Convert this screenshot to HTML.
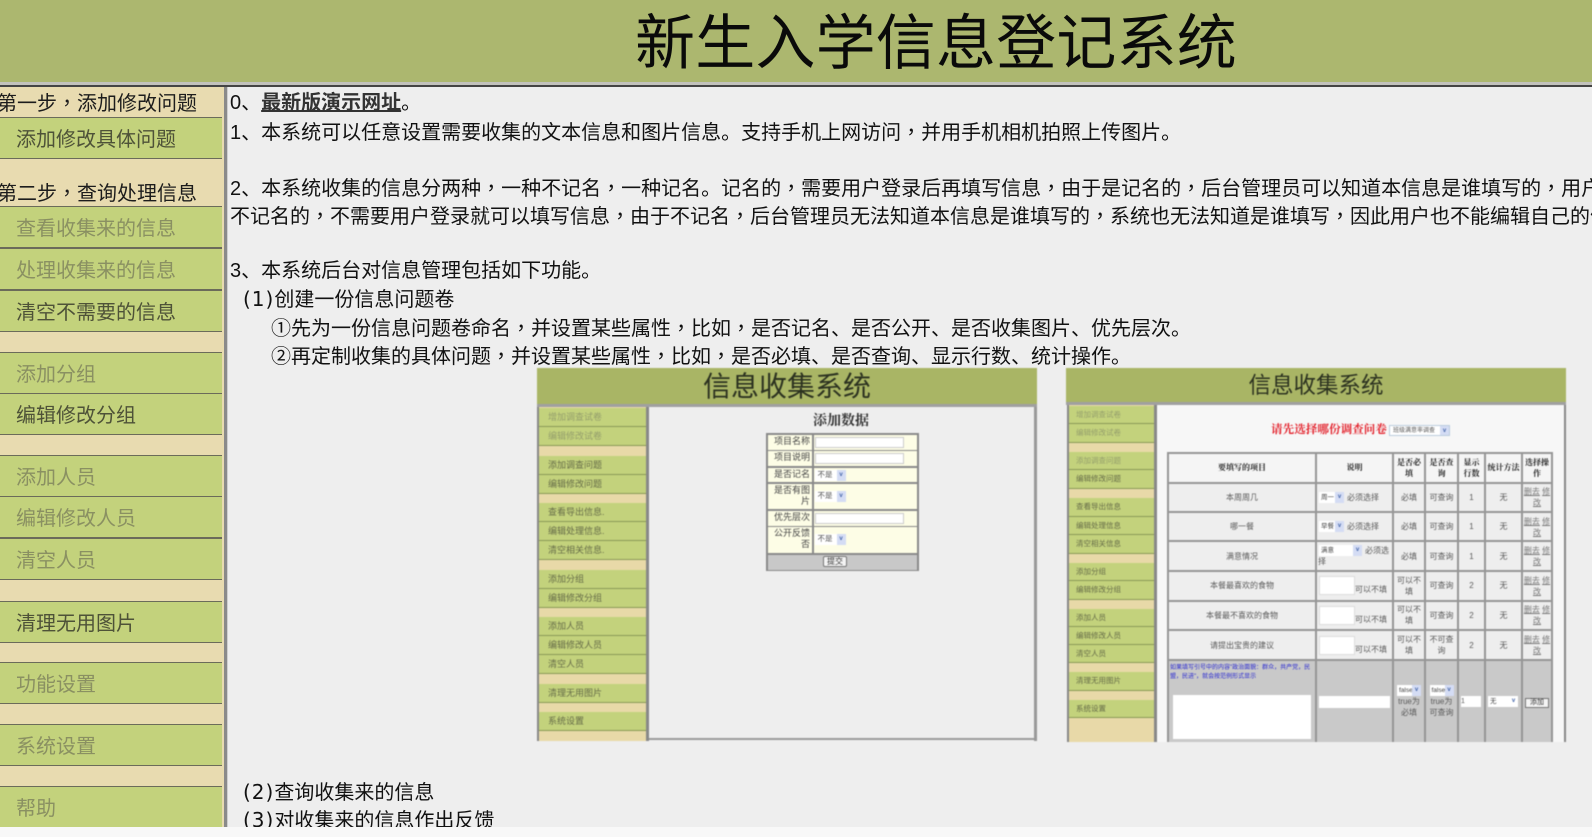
<!DOCTYPE html>
<html>
<head>
<meta charset="utf-8">
<title>新生入学信息登记系统</title>
<style>
*{box-sizing:border-box}
html,body{margin:0;padding:0;width:1592px;height:837px;overflow:hidden;background:#f8f8f8;
font-family:"Liberation Sans","Noto Sans CJK SC",sans-serif;color:#111}
.a{position:absolute}
#page{position:absolute;left:0;top:0;width:1592px;height:827px;overflow:hidden;background:#eeeeee}
#hd{left:0;top:0;width:1592px;height:82px;background:#acb76f}
#hd div{position:absolute;left:635px;top:0;height:82px;line-height:88px;font-size:60px;letter-spacing:.2px;white-space:nowrap;color:#0a0a0a}
#b1{left:0;top:82px;width:1592px;height:3px;background:#c2c2bc}
#b2{left:0;top:85px;width:1592px;height:2px;background:#444}
#side{left:0;top:87px;width:224px;height:740px;background:#e8dbb0;overflow:hidden;font-size:20px}
#bar{left:224px;top:87px;width:3px;height:740px;background:#8a8a8a}
#bar2{left:227px;top:87px;width:1px;height:740px;background:#cfcfcf}
.st{position:absolute;left:-3px;white-space:nowrap;color:#1c1c1c;line-height:28px}
.it{position:absolute;left:0;width:222px;height:42px;background:#c3d27c;border-top:1px solid #6b6b5a;border-bottom:1px solid #6b6b5a;padding-left:16px;line-height:45px;white-space:nowrap;color:#8a9062}
.it.d{color:#4e5238}
.c{font-family:"Noto Sans CJK TC",sans-serif}
.p{font-family:"DejaVu Sans",sans-serif;letter-spacing:1px}
#txt{left:230px;top:89px;width:1362px;height:738px;overflow:hidden;font-size:20px;line-height:28px;white-space:nowrap;color:#111}
#txt div{position:absolute;left:0;white-space:nowrap}
#txt b{color:#333;text-decoration:underline}
.shot{position:absolute;overflow:hidden;background:#eeeeee;filter:blur(.45px)}
.sh{position:absolute;left:0;top:0;width:100%;background:#a9b565;text-align:center;white-space:nowrap;color:#2c3220}
.sb{position:absolute;background:#e8d9a8;border-left:2px solid #888;border-right:3px solid #888;overflow:hidden}
.r{position:relative;background:#c3d27c;border-bottom:1px solid #8a9a58;white-space:nowrap;color:#666c48}
.r.x{margin-top:9.5px}
.r.y{color:#949e6c}
#t1 div{position:absolute}
.l{background:#fdfde6;color:#444;font-size:9px;line-height:11px;text-align:right;padding:1px 2px 0 2px}
.v{background:#fdfde6}
.in{position:absolute;background:#fff;border:1px solid #ccc;height:11px}
.se{position:absolute;background:#fff;font-size:7.5px;color:#555;line-height:10px;height:11px;padding-left:3px;white-space:nowrap}
.se i,.sl i{position:absolute;right:0;top:0;width:9px;height:100%;background:#d4dcf4;color:#46a;font-style:normal;font-weight:bold;text-align:center;font-size:6px;line-height:10px}
.sl{display:inline-block;position:relative;height:11px;background:#fff;font-size:6.5px;line-height:11px;padding-left:2px;vertical-align:middle;text-align:left;color:#444;margin-right:3px}
table.tb{position:absolute;left:101px;top:84px;width:386px;table-layout:fixed;border-collapse:separate;border-spacing:2px;background:#969696;font-size:8px;line-height:11px;color:#5a5a5a}
table.tb td{background:#eee;padding:0;text-align:center;overflow:hidden;position:relative}
table.tb tr.h td{font-family:"Liberation Serif","Noto Serif CJK SC",serif;font-weight:bold;color:#222;background:#f5f5f5}
table.tb tr.f td{background:#c9c9c9}
.u{text-decoration:underline;color:#777}
.bx{display:inline-block;width:36px;height:19px;background:#fff;vertical-align:bottom;border:1px solid #ddd}
</style>
</head>
<body>
<div id="page">
<div id="hd" class="a"><div>新生入学信息登记系统</div></div>
<div id="b1" class="a"></div>
<div id="b2" class="a"></div>

<div id="side" class="a">
<div class="st" style="top:1px">第一步<span class="c" lang="zh-Hant">，</span>添加修改问题</div>
<div class="it d" style="top:30px">添加修改具体问题</div>
<div class="st" style="top:91px">第二步<span class="c" lang="zh-Hant">，</span>查询处理信息</div>
<div class="it" style="top:119px">查看收集来的信息</div>
<div class="it" style="top:161px">处理收集来的信息</div>
<div class="it d" style="top:202.5px">清空不需要的信息</div>
<div class="it" style="top:264.5px">添加分组</div>
<div class="it d" style="top:306px">编辑修改分组</div>
<div class="it" style="top:367.5px">添加人员</div>
<div class="it" style="top:409px">编辑修改人员</div>
<div class="it" style="top:451px">清空人员</div>
<div class="it d" style="top:514px">清理无用图片</div>
<div class="it" style="top:575px">功能设置</div>
<div class="it" style="top:637px">系统设置</div>
<div class="it" style="top:699px;height:50px">帮助</div>
</div>
<div id="bar" class="a"></div>
<div id="bar2" class="a"></div>

<div id="txt" class="a">
<div style="top:0">0、<b>最新版演示网址</b>。</div>
<div style="top:28px">1、本系统可以任意设置需要收集的文本信息和图片信息。支持手机上网访问<span class="c" lang="zh-Hant">，</span>并用手机相机拍照上传图片。</div>
<div style="top:84px">2、本系统收集的信息分两种<span class="c" lang="zh-Hant">，</span>一种不记名<span class="c" lang="zh-Hant">，</span>一种记名。记名的<span class="c" lang="zh-Hant">，</span>需要用户登录后再填写信息<span class="c" lang="zh-Hant">，</span>由于是记名的<span class="c" lang="zh-Hant">，</span>后台管理员可以知道本信息是谁填写的<span class="c" lang="zh-Hant">，</span>用户也能编辑自己填写的信息。</div>
<div style="top:112px">不记名的<span class="c" lang="zh-Hant">，</span>不需要用户登录就可以填写信息<span class="c" lang="zh-Hant">，</span>由于不记名<span class="c" lang="zh-Hant">，</span>后台管理员无法知道本信息是谁填写的<span class="c" lang="zh-Hant">，</span>系统也无法知道是谁填写<span class="c" lang="zh-Hant">，</span>因此用户也不能编辑自己的信息。</div>
<div style="top:168px">3、本系统后台对信息管理包括如下功能。</div>
<div style="top:196px;left:13px"><span class="p">(1)</span>创建一份信息问题卷</div>
<div style="top:224px;left:41px">①先为一份信息问题卷命名<span class="c" lang="zh-Hant">，</span>并设置某些属性<span class="c" lang="zh-Hant">，</span>比如<span class="c" lang="zh-Hant">，</span>是否记名、是否公开、是否收集图片、优先层次。</div>
<div style="top:252px;left:41px">②再定制收集的具体问题<span class="c" lang="zh-Hant">，</span>并设置某些属性<span class="c" lang="zh-Hant">，</span>比如<span class="c" lang="zh-Hant">，</span>是否必填、是否查询、显示行数、统计操作。</div>
<div style="top:689px;left:13px"><span class="p">(2)</span>查询收集来的信息</div>
<div style="top:717px;left:13px"><span class="p">(3)</span>对收集来的信息作出反馈</div>
</div>

<!-- shot 1 -->
<div class="shot" style="left:537px;top:368px;width:500px;height:373px">
<div class="sh" style="height:36px;line-height:38px;font-size:28px">信息收集系统</div>
<div class="a" style="left:0;top:36px;width:500px;height:3px;background:#a0a0a0"></div>
<div class="sb" style="left:0;top:39px;width:112px;height:334px;padding-top:1px;font-size:9px;line-height:18px">
<div class="r y" style="height:19px;padding-left:9px">增加调查试卷</div>
<div class="r y" style="height:19px;padding-left:9px">编辑修改试卷</div>
<div class="r x" style="height:19px;padding-left:9px">添加调查问题</div>
<div class="r" style="height:19px;padding-left:9px">编辑修改问题</div>
<div class="r x" style="height:19px;padding-left:9px">查看导出信息.</div>
<div class="r" style="height:19px;padding-left:9px">编辑处理信息.</div>
<div class="r" style="height:19px;padding-left:9px">清空相关信息.</div>
<div class="r x" style="height:19px;padding-left:9px">添加分组</div>
<div class="r" style="height:19px;padding-left:9px">编辑修改分组</div>
<div class="r x" style="height:19px;padding-left:9px">添加人员</div>
<div class="r" style="height:19px;padding-left:9px">编辑修改人员</div>
<div class="r" style="height:19px;padding-left:9px">清空人员</div>
<div class="r x" style="height:19px;padding-left:9px">清理无用图片</div>
<div class="r x" style="height:19px;padding-left:9px">系统设置</div>
</div>
<div class="a" style="left:112px;top:370px;width:388px;height:2px;background:#9a9a9a"></div>
<div class="a" style="left:497px;top:39px;width:3px;height:334px;background:#999"></div>
<div class="a" style="left:264px;top:46px;width:80px;text-align:center;font:bold 14px/16px 'Liberation Serif','Noto Serif CJK SC',serif;color:#333">添加数据</div>
<div id="t1" class="a" style="left:229px;top:65px;width:153px;height:138px;background:#8a8a8a">
<div class="l" style="left:2px;top:1.5px;width:44px;height:15px">项目名称</div><div class="v" style="left:47.5px;top:1.5px;width:103.5px;height:15px"><span class="in" style="left:1px;top:2px;width:89px"></span></div>
<div class="l" style="left:2px;top:18px;width:44px;height:15px">项目说明</div><div class="v" style="left:47.5px;top:18px;width:103.5px;height:15px"><span class="in" style="left:1px;top:2px;width:89px"></span></div>
<div class="l" style="left:2px;top:34.5px;width:44px;height:14.5px">是否记名</div><div class="v" style="left:47.5px;top:34.5px;width:103.5px;height:14.5px"><span class="se" style="left:1px;top:2px;width:31px">不是<i>v</i></span></div>
<div class="l" style="left:2px;top:50.5px;width:44px;height:25.5px">是否有图片</div><div class="v" style="left:47.5px;top:50.5px;width:103.5px;height:25.5px"><span class="se" style="left:1px;top:7px;width:31px">不是<i>v</i></span></div>
<div class="l" style="left:2px;top:77.5px;width:44px;height:15px">优先层次</div><div class="v" style="left:47.5px;top:77.5px;width:103.5px;height:15px"><span class="in" style="left:1px;top:2px;width:89px"></span></div>
<div class="l" style="left:2px;top:94px;width:44px;height:25.5px">公开反馈否</div><div class="v" style="left:47.5px;top:94px;width:103.5px;height:25.5px"><span class="se" style="left:1px;top:7px;width:31px">不是<i>v</i></span></div>
<div style="left:2px;top:121.5px;width:149px;height:15px;background:#c8c8c8"></div>
<div style="left:57px;top:123px;width:24px;height:11px;background:#f4f4f4;border:1px solid #777;border-radius:2px;font-size:8px;line-height:9px;text-align:center;color:#333">提交</div>
</div>
</div>

<!-- shot 2 -->
<div class="shot" style="left:1066px;top:368px;width:500px;height:374px">
<div class="sh" style="height:34px;line-height:36px;font-size:22.5px">信息收集系统</div>
<div class="a" style="left:0;top:34px;width:500px;height:3px;background:#a0a0a0"></div>
<div class="sb" style="left:1px;top:37px;width:90px;height:337px;padding-top:.7px;font-size:7.5px;line-height:17px">
<div class="r y" style="height:18.6px;padding-left:7px">增加调查试卷</div>
<div class="r y" style="height:18.6px;padding-left:7px">编辑修改试卷</div>
<div class="r x y" style="height:18.6px;padding-left:7px;margin-top:9px">添加调查问题</div>
<div class="r" style="height:18.6px;padding-left:7px">编辑修改问题</div>
<div class="r x" style="height:18.6px;padding-left:7px;margin-top:9px">查看导出信息</div>
<div class="r" style="height:18.6px;padding-left:7px">编辑处理信息</div>
<div class="r" style="height:18.6px;padding-left:7px">清空相关信息</div>
<div class="r x" style="height:18.6px;padding-left:7px;margin-top:9px">添加分组</div>
<div class="r" style="height:18.6px;padding-left:7px">编辑修改分组</div>
<div class="r x" style="height:18px;padding-left:7px;margin-top:9px">添加人员</div>
<div class="r" style="height:18px;padding-left:7px">编辑修改人员</div>
<div class="r" style="height:18.4px;padding-left:7px">清空人员</div>
<div class="r x" style="height:18.4px;padding-left:7px;margin-top:9px">清理无用图片</div>
<div class="r x" style="height:18.4px;padding-left:7px;margin-top:9px">系统设置</div>
</div>
<div class="a" style="left:91px;top:37px;width:409px;height:337px;background:#f7f7f7"></div>
<div class="a" style="left:498px;top:37px;width:2px;height:337px;background:#888"></div>
<div class="a" style="left:203px;top:55px;width:120px;text-align:center;white-space:nowrap;font:bold 11.6px/14px 'Liberation Serif','Noto Serif CJK SC',serif;color:#e3222c">请先选择哪份调查问卷</div>
<span class="se" style="left:323px;top:57px;width:61px;height:11px;border:1px solid #bcd;font-size:6px">班级满意率调查<i>v</i></span>
<table class="tb">
<colgroup><col style="width:146px"><col style="width:75px"><col style="width:30px"><col style="width:31px"><col style="width:25px"><col style="width:35px"><col style="width:28px"></colgroup>
<tr class="h" style="height:27.5px"><td>要填写的项目</td><td>说明</td><td>是否必<br>填</td><td>是否查<br>询</td><td>显示<br>行数</td><td>统计方法</td><td>选择操<br>作</td></tr>
<tr style="height:27.5px"><td>本周周几</td><td style="text-align:left;padding-left:2px"><span class="sl" style="width:25px">周一<i>v</i></span>必须选择</td><td>必填</td><td>可查询</td><td>1</td><td>无</td><td><span class="u">删去</span> <span class="u">修改</span></td></tr>
<tr style="height:27px"><td>哪一餐</td><td style="text-align:left;padding-left:2px"><span class="sl" style="width:25px">早餐<i>v</i></span>必须选择</td><td>必填</td><td>可查询</td><td>1</td><td>无</td><td><span class="u">删去</span> <span class="u">修改</span></td></tr>
<tr style="height:28px"><td>满意情况</td><td style="text-align:left;padding-left:1px"><span class="sl" style="width:43px;margin-left:1px">满意<i>v</i></span>必须选择</td><td>必填</td><td>可查询</td><td>1</td><td>无</td><td><span class="u">删去</span> <span class="u">修改</span></td></tr>
<tr style="height:27.5px"><td>本餐最喜欢的食物</td><td style="text-align:left;padding-left:2px"><span class="bx"></span>可以不填</td><td>可以不<br>填</td><td>可查询</td><td>2</td><td>无</td><td><span class="u">删去</span> <span class="u">修改</span></td></tr>
<tr style="height:27.5px"><td>本餐最不喜欢的食物</td><td style="text-align:left;padding-left:2px"><span class="bx"></span>可以不填</td><td>可以不<br>填</td><td>可查询</td><td>2</td><td>无</td><td><span class="u">删去</span> <span class="u">修改</span></td></tr>
<tr style="height:28px"><td>请提出宝贵的建议</td><td style="text-align:left;padding-left:2px"><span class="bx"></span>可以不填</td><td>可以不<br>填</td><td>不可查<br>询</td><td>2</td><td>无</td><td><span class="u">删去</span> <span class="u">修改</span></td></tr>
<tr class="f" style="height:79px">
<td style="vertical-align:top;text-align:left;padding:3px 1px;font-size:6px;line-height:9px;color:#2a2ad0">如果填写引号中的内容"政治面貌：群众，共产党，民盟，民进"，就会按范例形式显示<span style="display:block;margin:13px 3px 0 3px;height:44px;background:#fff"></span></td>
<td><span style="display:block;margin:0 2px;height:12px;background:#fff"></span></td>
<td><span class="sl" style="width:24px;margin:0">false<i>v</i></span><br>true为<br>必填</td>
<td><span class="sl" style="width:24px;margin:0">false<i>v</i></span><br>true为<br>可查询</td>
<td style="text-align:left;padding-left:2px"><span style="display:block;width:20px;height:11px;background:#fff;font-size:7px;line-height:11px">1</span></td>
<td style="text-align:left;padding-left:2px"><span class="sl" style="width:30px;margin:0">无<i style="background:#fff">v</i></span></td>
<td><span style="display:inline-block;width:24px;height:10px;background:#f4f4f4;border:1px solid #777;font-size:7px;line-height:8px;color:#333">添加</span></td>
</tr>
</table>
</div>

</div>
</body>
</html>
